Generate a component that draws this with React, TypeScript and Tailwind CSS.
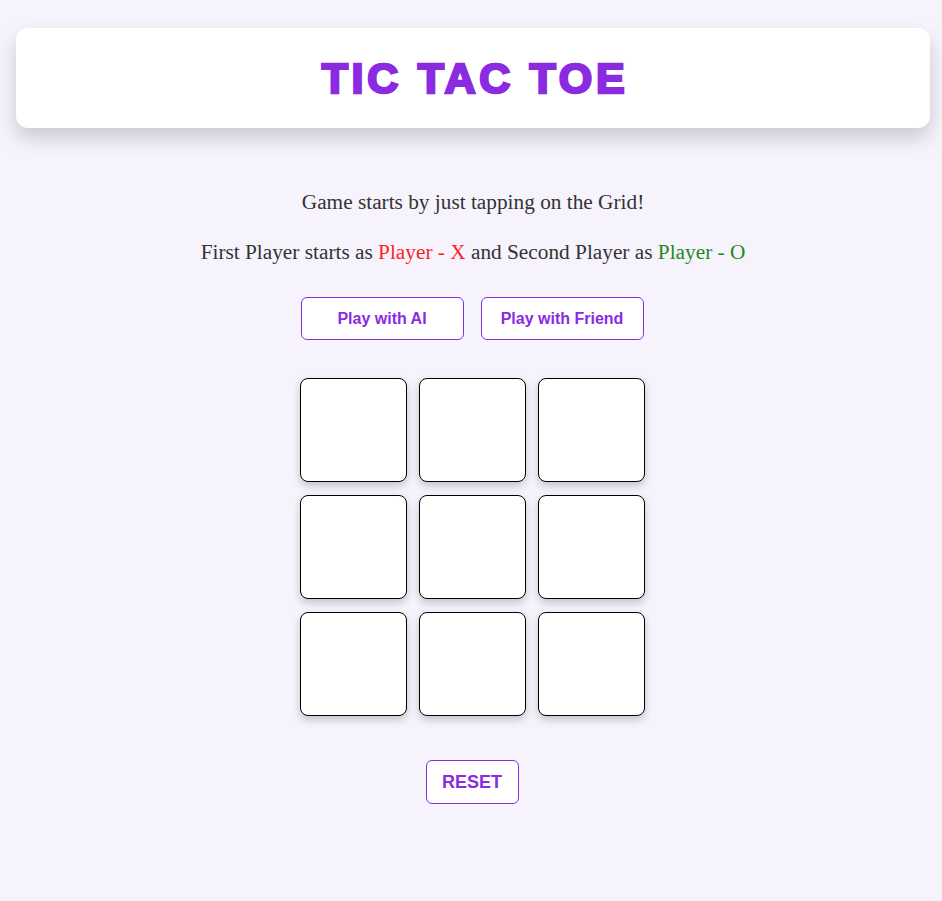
export default function App() {
  const cells = Array.from({ length: 9 }, (_, i) => i);

  return (
    <div className="min-h-[901px] bg-[#f6f3fd] pt-7 pl-4 pr-3 font-['Liberation_Serif',serif]">
      <header className="flex h-[100px] items-center justify-center rounded-xl bg-white shadow-[0_10px_20px_rgba(0,0,0,0.18)]">
        <h1 className="pl-[4px] font-['Liberation_Sans',Arial,sans-serif] text-[43px] font-extrabold leading-none tracking-[3.7px] text-[#8a2be2] [-webkit-text-stroke:2.5px_#8a2be2]">
          TIC TAC TOE
        </h1>
      </header>

      <div className="mt-[62px] flex flex-col items-center text-[21.3px] text-[#333]">
        <p className="leading-6">Game starts by just tapping on the Grid!</p>
        <p className="mt-[26px] leading-6">
          First Player starts as <span className="text-[#ff1f1f]">Player - X</span> and Second Player as{" "}
          <span className="text-[#1d8a1d]">Player - O</span>
        </p>
      </div>

      <div className="mt-[33px] flex justify-center gap-[17px] pr-[2px] font-['Liberation_Sans',Arial,sans-serif]">
        {["Play with AI", "Play with Friend"].map((label) => (
          <button
            key={label}
            type="button"
            className="h-[43px] w-[163px] rounded-md border border-[#8a2be2] bg-white text-base font-bold text-[#8a2be2]"
          >
            {label}
          </button>
        ))}
      </div>

      <div className="mt-[38px] flex justify-center pr-[1px]">
        <div className="grid grid-cols-[107px_107px_107px] gap-x-[12px] gap-y-[13px]">
          {cells.map((i) => (
            <button
              key={i}
              type="button"
              className="h-[104px] w-[107px] rounded-lg border border-black bg-white shadow-[0_4px_8px_rgba(0,0,0,0.2)]"
            />
          ))}
        </div>
      </div>

      <div className="mt-[44px] flex justify-center pr-[2px] font-['Liberation_Sans',Arial,sans-serif]">
        <button
          type="button"
          className="h-[44px] w-[93px] rounded-md border border-[#8a2be2] bg-white text-lg font-bold text-[#8a2be2]"
        >
          RESET
        </button>
      </div>
    </div>
  );
}
